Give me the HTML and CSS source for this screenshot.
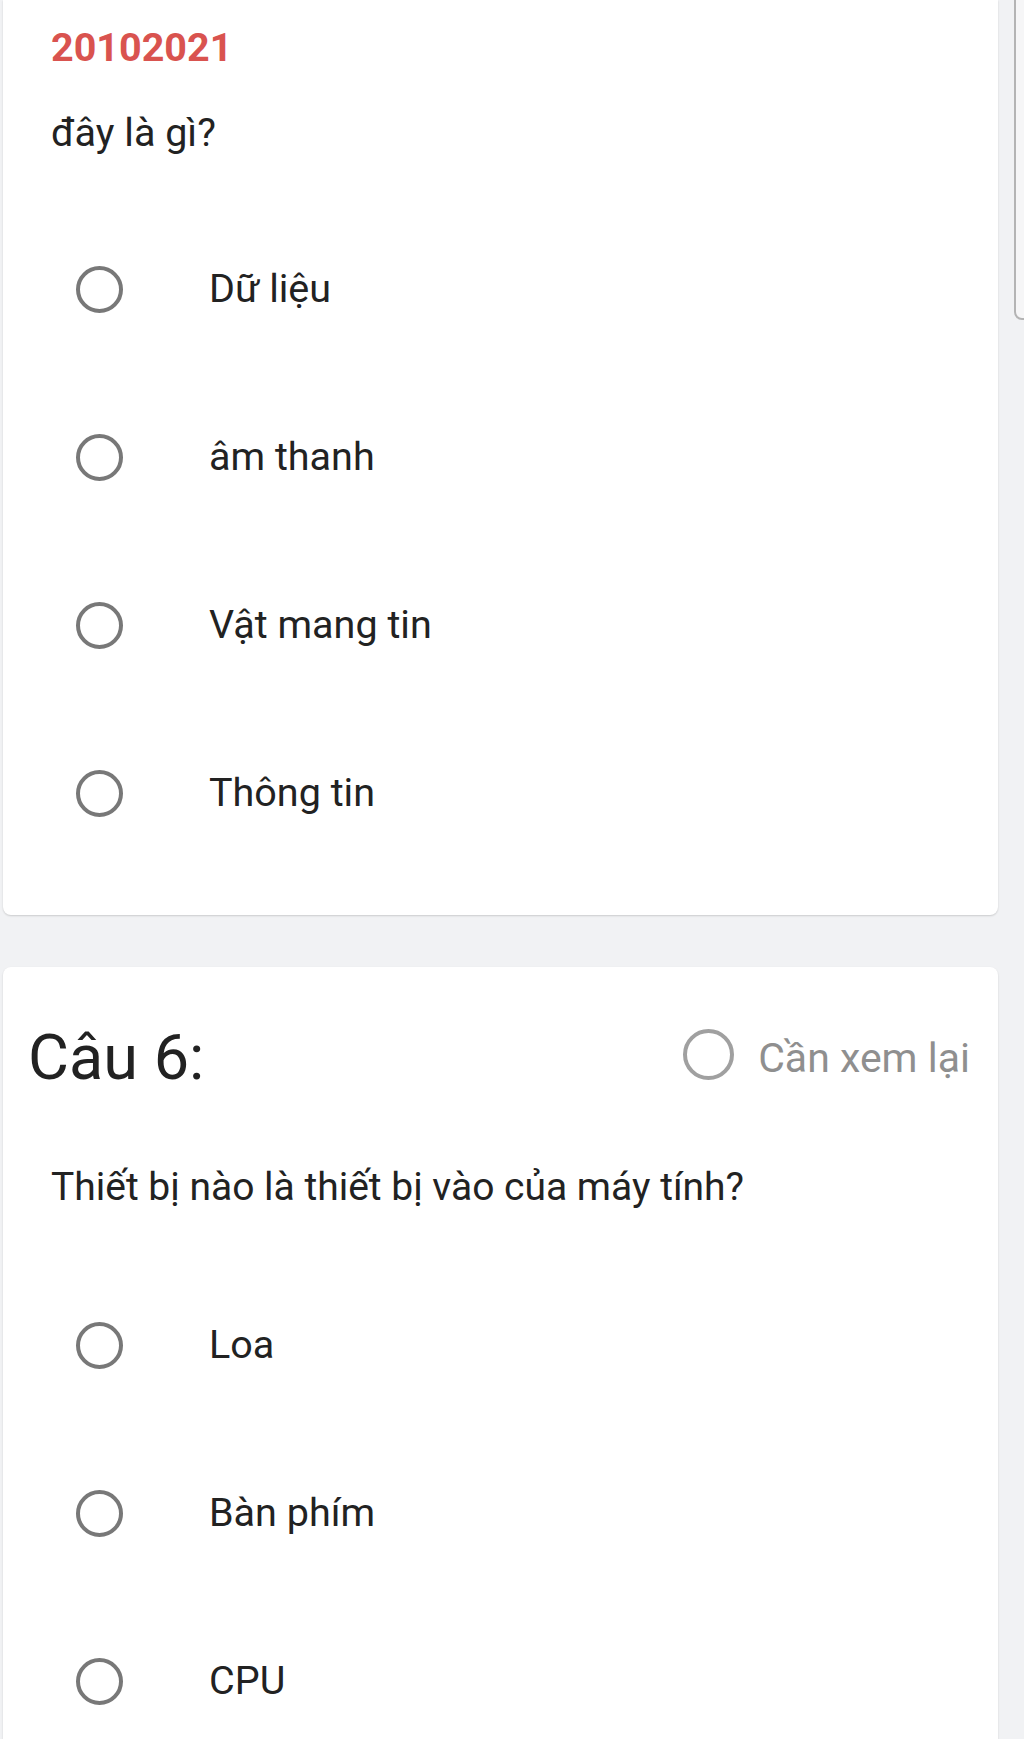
FILE: index.html
```html
<!DOCTYPE html>
<html lang="vi">
<head>
<meta charset="utf-8">
<title>Câu hỏi</title>
<link rel="stylesheet" href="styles.css">
</head>
<body>
<div class="page">
  <section class="card card-top">
    <div class="code">20102021</div>
    <div class="question q1">đây là gì?</div>
    <ul class="options">
      <li class="option"><span class="radio"></span><span class="label">Dữ liệu</span></li>
      <li class="option"><span class="radio"></span><span class="label">âm thanh</span></li>
      <li class="option"><span class="radio"></span><span class="label">Vật mang tin</span></li>
      <li class="option"><span class="radio"></span><span class="label">Thông tin</span></li>
    </ul>
  </section>
  <section class="card card-next">
    <div class="head">
      <div class="num">Câu 6:</div>
      <div class="review"><span class="radio radio-review"></span><span class="review-label">Cần xem lại</span></div>
    </div>
    <div class="question q2">Thiết bị nào là thiết bị vào của máy tính?</div>
    <ul class="options">
      <li class="option"><span class="radio"></span><span class="label">Loa</span></li>
      <li class="option"><span class="radio"></span><span class="label">Bàn phím</span></li>
      <li class="option"><span class="radio"></span><span class="label">CPU</span></li>
    </ul>
  </section>
  <div class="scroll-thumb"></div>
</div>
</body>
</html>
```

FILE: styles.css
```css
* { box-sizing: border-box; }
html, body {
  margin: 0;
  padding: 0;
}
body {
  width: 1024px;
  height: 1739px;
  overflow: hidden;
  background: #f1f2f4;
  font-family: Roboto, "Noto Sans", "Liberation Sans", sans-serif;
  color: #212121;
}
.page {
  position: relative;
  height: 1739px;
  padding: 0 26px 0 3px;
  display: flex;
  flex-direction: column;
  gap: 52px;
}
.card {
  background: #ffffff;
  border-radius: 8px;
  box-shadow: 0 1px 2px rgba(0, 0, 0, 0.16);
}
.card-top {
  border-radius: 0 0 8px 8px;
  padding: 26px 0 38px 48px;
}
.code {
  font-size: 39.5px;
  line-height: 44px;
  font-weight: 700;
  color: #d9534f;
}
.question {
  font-size: 39.5px;
  line-height: 44px;
  color: #222222;
}
.q1 { margin-top: 41px; }
.options {
  list-style: none;
  margin: 50px 0 0 0;
  padding: 0;
}
.option {
  height: 168px;
  display: flex;
  align-items: center;
  padding-left: 25px;
}
.radio {
  width: 47px;
  height: 47px;
  border: 4px solid #787878;
  border-radius: 50%;
  flex: none;
}
.label {
  margin-left: 86px;
  font-size: 39.5px;
  line-height: 44px;
  color: #222222;
}
.card-next {
  flex: 1;
  border-radius: 8px 8px 0 0;
  padding: 56px 28px 0 25px;
}
.head {
  display: flex;
  justify-content: space-between;
  align-items: center;
  height: 70px;
}
.num {
  font-size: 63px;
  line-height: 70px;
  color: #222222;
}
.review {
  display: flex;
  align-items: center;
  gap: 24px;
}
.radio-review {
  width: 51px;
  height: 51px;
  border-color: #a0a0a0;
  margin-bottom: 8px;
}
.review-label {
  font-size: 41px;
  line-height: 46px;
  color: #8f8f8f;
}
.q2 {
  margin-top: 72px;
  margin-left: 23px;
  font-size: 39px;
}
.card-next .options {
  margin-top: 52px;
  margin-left: 23px;
}
.scroll-thumb {
  position: absolute;
  top: -10px;
  left: 1014px;
  width: 30px;
  height: 330px;
  border: 2px solid #b4b4b4;
  border-radius: 8px;
  background: #f6f6f7;
}
```
